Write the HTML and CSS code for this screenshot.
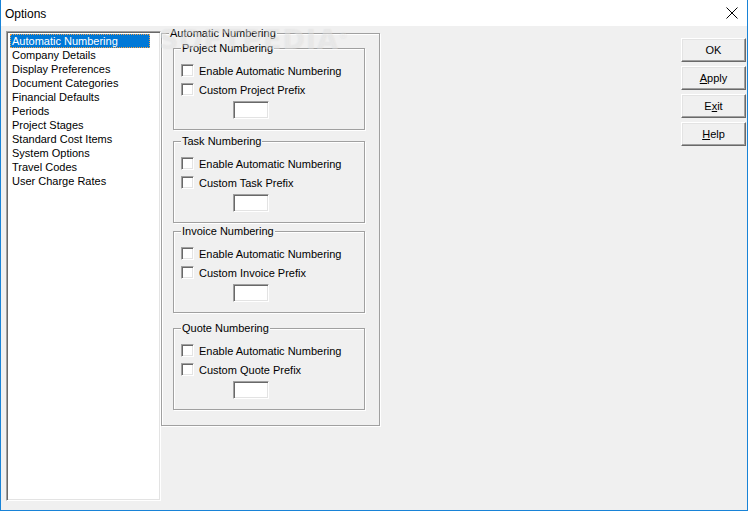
FILE: index.html
```html
<!DOCTYPE html>
<html>
<head>
<meta charset="utf-8">
<link rel="stylesheet" href="styles.css">
</head>
<body>
<div class="window">
  <div class="titlebar">
    <span class="title">Options</span>
    <svg class="close" width="12" height="12" viewBox="0 0 12 12"><path d="M0.5 0.5 L11.5 11.5 M11.5 0.5 L0.5 11.5" stroke="#000" stroke-width="1" fill="none"/></svg>
  </div>
  <div class="content">
    <ul class="listbox">
      <li class="item selected"><span>Automatic Numbering</span></li>
      <li class="item">Company Details</li>
      <li class="item">Display Preferences</li>
      <li class="item">Document Categories</li>
      <li class="item">Financial Defaults</li>
      <li class="item">Periods</li>
      <li class="item">Project Stages</li>
      <li class="item">Standard Cost Items</li>
      <li class="item">System Options</li>
      <li class="item">Travel Codes</li>
      <li class="item">User Charge Rates</li>
    </ul>
    <fieldset class="outer">
      <legend>Automatic Numbering</legend>
      <fieldset class="group">
        <legend>Project Numbering</legend>
        <label class="row"><span class="check"></span>Enable Automatic Numbering</label>
        <label class="row"><span class="check"></span>Custom Project Prefix</label>
        <div class="field"><span class="textbox"></span></div>
      </fieldset>
      <fieldset class="group g-task">
        <legend>Task Numbering</legend>
        <label class="row"><span class="check"></span>Enable Automatic Numbering</label>
        <label class="row"><span class="check"></span>Custom Task Prefix</label>
        <div class="field"><span class="textbox"></span></div>
      </fieldset>
      <fieldset class="group g-invoice">
        <legend>Invoice Numbering</legend>
        <label class="row"><span class="check"></span>Enable Automatic Numbering</label>
        <label class="row"><span class="check"></span>Custom Invoice Prefix</label>
        <div class="field"><span class="textbox"></span></div>
      </fieldset>
      <fieldset class="group g-quote">
        <legend>Quote Numbering</legend>
        <label class="row"><span class="check"></span>Enable Automatic Numbering</label>
        <label class="row"><span class="check"></span>Custom Quote Prefix</label>
        <div class="field"><span class="textbox"></span></div>
      </fieldset>
    </fieldset>
    <div class="buttons">
      <button class="btn">OK</button>
      <button class="btn"><u>A</u>pply</button>
      <button class="btn">E<u>x</u>it</button>
      <button class="btn"><u>H</u>elp</button>
    </div>
    <div class="watermark" aria-hidden="true">SOFTPEDIA<sup>®</sup></div>
  </div>
</div>
</body>
</html>
```

FILE: styles.css
```css
* { box-sizing: border-box; }
html, body { margin: 0; padding: 0; }
body {
  width: 748px;
  height: 511px;
  overflow: hidden;
  font-family: "Liberation Sans", Arial, sans-serif;
  font-size: 11px;
  color: #000;
  background: #f0f0f0;
}
.window {
  width: 748px;
  height: 511px;
  display: flex;
  flex-direction: column;
  border-left: 1px solid #1883d7;
  border-right: 1px solid #1883d7;
  border-bottom: 1px solid #1883d7;
}
.titlebar {
  height: 26px;
  background: #fff;
  display: flex;
  align-items: center;
  padding-left: 4px;
  padding-right: 9px;
}
.title {
  font-size: 12px;
  flex: 1;
  padding-top: 1px;
}
.close { display: block; }
.content {
  position: relative;
  flex: 1;
  display: flex;
  align-items: flex-start;
  padding: 0 1px 9px 5px;
  background: #f0f0f0;
}
.listbox {
  list-style: none;
  margin: 5px 0 0 0;
  padding: 2px 2px;
  width: 155px;
  height: 470px;
  background: #fff;
  border: 1px solid;
  border-color: #a0a0a0 #fff #fff #a0a0a0;
  box-shadow: inset 1px 1px 0 #696969, inset -1px -1px 0 #e3e3e3;
}
.item {
  height: 14px;
  line-height: 14px;
  padding-left: 3px;
  white-space: nowrap;
}
.item.selected {
  padding-left: 1px;
}
.item.selected span {
  display: block;
  width: 140px;
  height: 14px;
  padding-left: 2px;
  background: #0078d7;
  color: #fff;
  outline: 1px dotted #f4a14a;
  outline-offset: -1px;
}
fieldset {
  margin: 0;
  padding: 0;
  min-width: 0;
  border: 1px solid #a0a0a0;
  box-shadow: 1px 1px 0 #fff, inset 1px 1px 0 #fff;
}
legend {
  padding: 0 1px;
  margin-left: 7px;
  line-height: 14px;
  height: 14px;
  background: #f0f0f0;
}
.outer {
  width: 219px;
  height: 400px;
  padding: 1px 0 0 0;
}
.group {
  width: 192px;
  height: 89px;
  margin-left: 11px;
  padding: 6px 0 0 0;
}
.group legend { margin-left: 7px; }
.g-task { margin-top: 4px; }
.g-invoice { margin-top: 1px; }
.g-quote { margin-top: 8px; }
.row {
  display: flex;
  align-items: center;
  height: 19px;
  padding-left: 7px;
  white-space: nowrap;
}
.check {
  width: 13px;
  height: 13px;
  margin-right: 5px;
  background: #fff;
  border: 1px solid;
  border-color: #a0a0a0 #fff #fff #a0a0a0;
  box-shadow: inset 1px 1px 0 #696969, inset -1px -1px 0 #e3e3e3;
}
.field {
  padding-left: 59px;
  padding-top: 2px;
}
.textbox {
  display: block;
  width: 36px;
  height: 18px;
  background: #fff;
  border: 1px solid;
  border-color: #a0a0a0 #fff #fff #a0a0a0;
  box-shadow: inset 1px 1px 0 #696969, inset -1px -1px 0 #e3e3e3;
}
.buttons {
  margin-left: auto;
  display: flex;
  flex-direction: column;
  gap: 4px;
  padding-top: 12px;
}
.btn {
  width: 65px;
  height: 24px;
  padding: 0;
  font-family: "Liberation Sans", Arial, sans-serif;
  font-size: 11px;
  color: #000;
  background: #f0f0f0;
  border: 1px solid;
  border-color: #fff #696969 #696969 #fff;
  box-shadow: inset -1px -1px 0 #a0a0a0, inset 1px 1px 0 #e3e3e3;
}
.watermark {
  position: absolute;
  left: 158px;
  top: -2px;
  font-family: "DejaVu Sans", sans-serif;
  font-weight: bold;
  font-size: 27px;
  letter-spacing: 1px;
  color: rgba(255,255,255,0.3);
  text-shadow: 0 0 1px rgba(170,170,170,0.25);
  pointer-events: none;
}
.watermark sup { font-size: 9px; font-weight: normal; }
```
